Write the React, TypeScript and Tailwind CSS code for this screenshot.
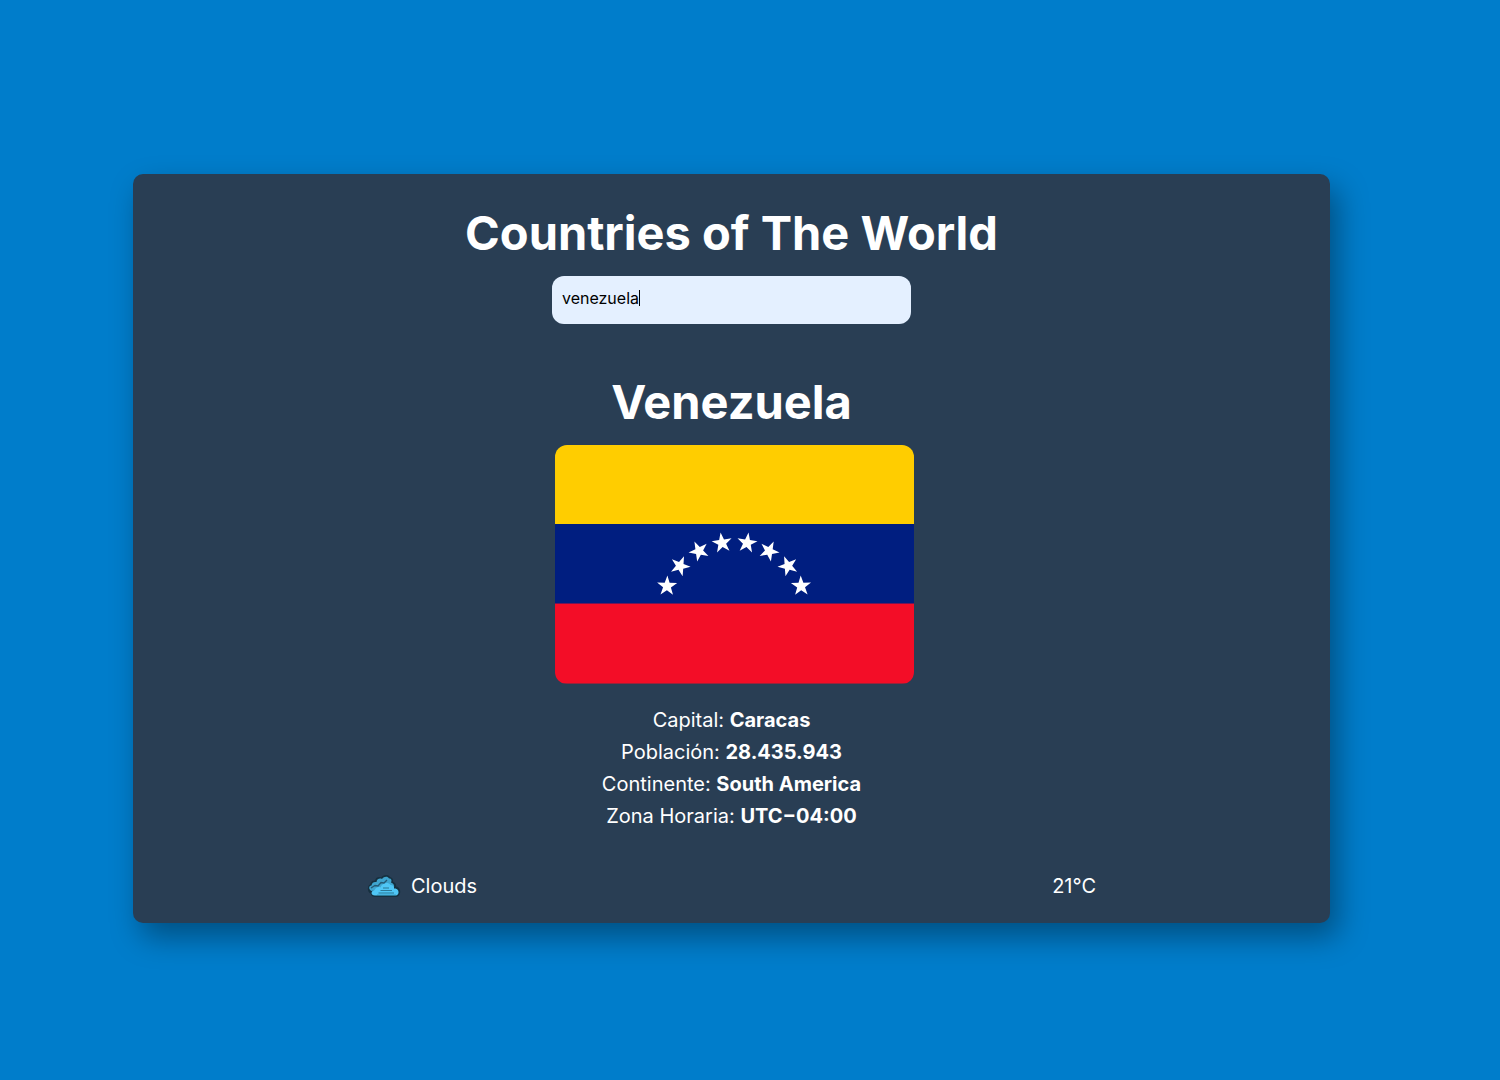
import React, { useState } from "react";

const stars = [
  { x: 112, y: 141, r: 2 },
  { x: 125, y: 121, r: 22 },
  { x: 144, y: 106, r: -26 },
  { x: 167, y: 98, r: -8 },
  { x: 192, y: 98, r: 8 },
  { x: 214, y: 106, r: 26 },
  { x: 233, y: 121, r: -22 },
  { x: 246, y: 141, r: -2 },
];

function Flag() {
  return (
    <svg
      role="img"
      aria-label="Flag of Venezuela"
      viewBox="0 0 359 238"
      className="block w-full rounded-xl"
    >
      <rect width="359" height="79" fill="#ffcd00" />
      <rect y="79" width="359" height="80" fill="#001e80" />
      <rect y="158.5" width="359" height="80" fill="#f30d27" />
      {stars.map((s) => (
        <path
          key={s.x}
          transform={`translate(${s.x} ${s.y}) rotate(${s.r}) scale(1.06)`}
          d="M0-10L2.3-3.1L9.5-3.1L3.7 1.2L5.9 8.1L0 3.9L-5.9 8.1L-3.7 1.2L-9.5-3.1L-2.3-3.1Z"
          fill="#fff"
        />
      ))}
    </svg>
  );
}

function CloudIcon() {
  return (
    <svg aria-hidden="true" viewBox="0 0 34 24" className="h-6 w-[34px]">
      <path
        d="M4 20C0 18 0 12 3 10.500C4 7 6 6.500 8 6.500C9 3 12 2.500 14 3.500C16 0.500 21 0 23 3C25.500 3.500 26.500 5.500 26 7.500C28.500 9 29.500 10.500 29 12.500C32 13 34 16 33 19.500C32 22.500 30 23 28 23H8C6 23 4 22 4 20Z"
        fill="#16303f"
      />
      <path
        d="M4.500 17C1 15 2 11.500 4.500 11.500C5 8.500 7 7.500 9.500 8C10 4.500 13 4 15 5C17 2 21 2 22 4.500C24.500 4.500 25 6.500 24 8.500C27 9.500 27.500 11.500 27 13.500L18 15L9 16Z"
        fill="#3fa5cf"
      />
      <path
        d="M8 21.500C3.500 21.500 3.500 17 7.500 16C9 13.500 11 12.500 13.500 13.500C15 9 21 7.500 23.500 11C26 11 27.500 13 27 14.500C30 14 32 16.500 31.500 19C31 21 29.500 21.500 28 21.500Z"
        fill="#4fc6f5"
      />
      <path d="M4 14L8 11.500L11 12L14 8.500L17 9L20 6" fill="none" stroke="#245a75" strokeWidth="1.300" />
      <path d="M16 14H22M13.500 16.500H25M11.500 19H27M10 21.300H29" stroke="#2b7896" strokeWidth="1.200" />
    </svg>
  );
}

const facts = [
  ["Capital", "Caracas"],
  ["Población", "28.435.943"],
  ["Continente", "South America"],
  ["Zona Horaria", "UTC−04:00"],
];

export default function App() {
  const [query, setQuery] = useState("venezuela");
  return (
    <div className="flex min-h-screen items-center bg-[#007dcb] pt-[17px] pr-[170px] pl-[133px] font-['Inter',sans-serif] text-white">
      <main className="flex flex-1 flex-col items-center rounded-[10px] bg-[#293e54] pt-[27px] pb-[21px] shadow-[8px_14px_30px_rgba(0,0,0,0.36)]">
        <h1 className="text-[47px] leading-[64px] font-bold">Countries of The World</h1>
        <div className="relative mt-[11px] w-[30%]">
          <input
            type="text"
            aria-label="Country"
            value={query}
            onChange={(e) => setQuery(e.target.value)}
            className="block h-12 w-full rounded-xl bg-[#e4f0ff] px-[10px] pb-1 text-[16px] text-black caret-transparent outline-none"
          />
          <div
            aria-hidden="true"
            className="pointer-events-none absolute inset-y-0 left-[10px] flex items-center pb-1 text-[16px]"
          >
            <span className="invisible">{query}</span>
            <span className="h-4 w-px bg-black" />
          </div>
        </div>
        <h2 className="mt-[46px] text-[47px] leading-[64px] font-bold">Venezuela</h2>
        <div className="mt-[11px] ml-[6px] w-[30%]">
          <Flag />
        </div>
        <ul className="mt-5 text-center text-[20px] leading-8">
          {facts.map(([label, value]) => (
            <li key={label}>
              {label}: <strong className="font-bold">{value}</strong>
            </li>
          ))}
        </ul>
        <div className="mt-[38px] flex w-full items-center justify-between px-[234px] text-[20px] leading-8">
          <div className="flex items-center gap-[10px]">
            <CloudIcon />
            <span>Clouds</span>
          </div>
          <span>21°C</span>
        </div>
      </main>
    </div>
  );
}
